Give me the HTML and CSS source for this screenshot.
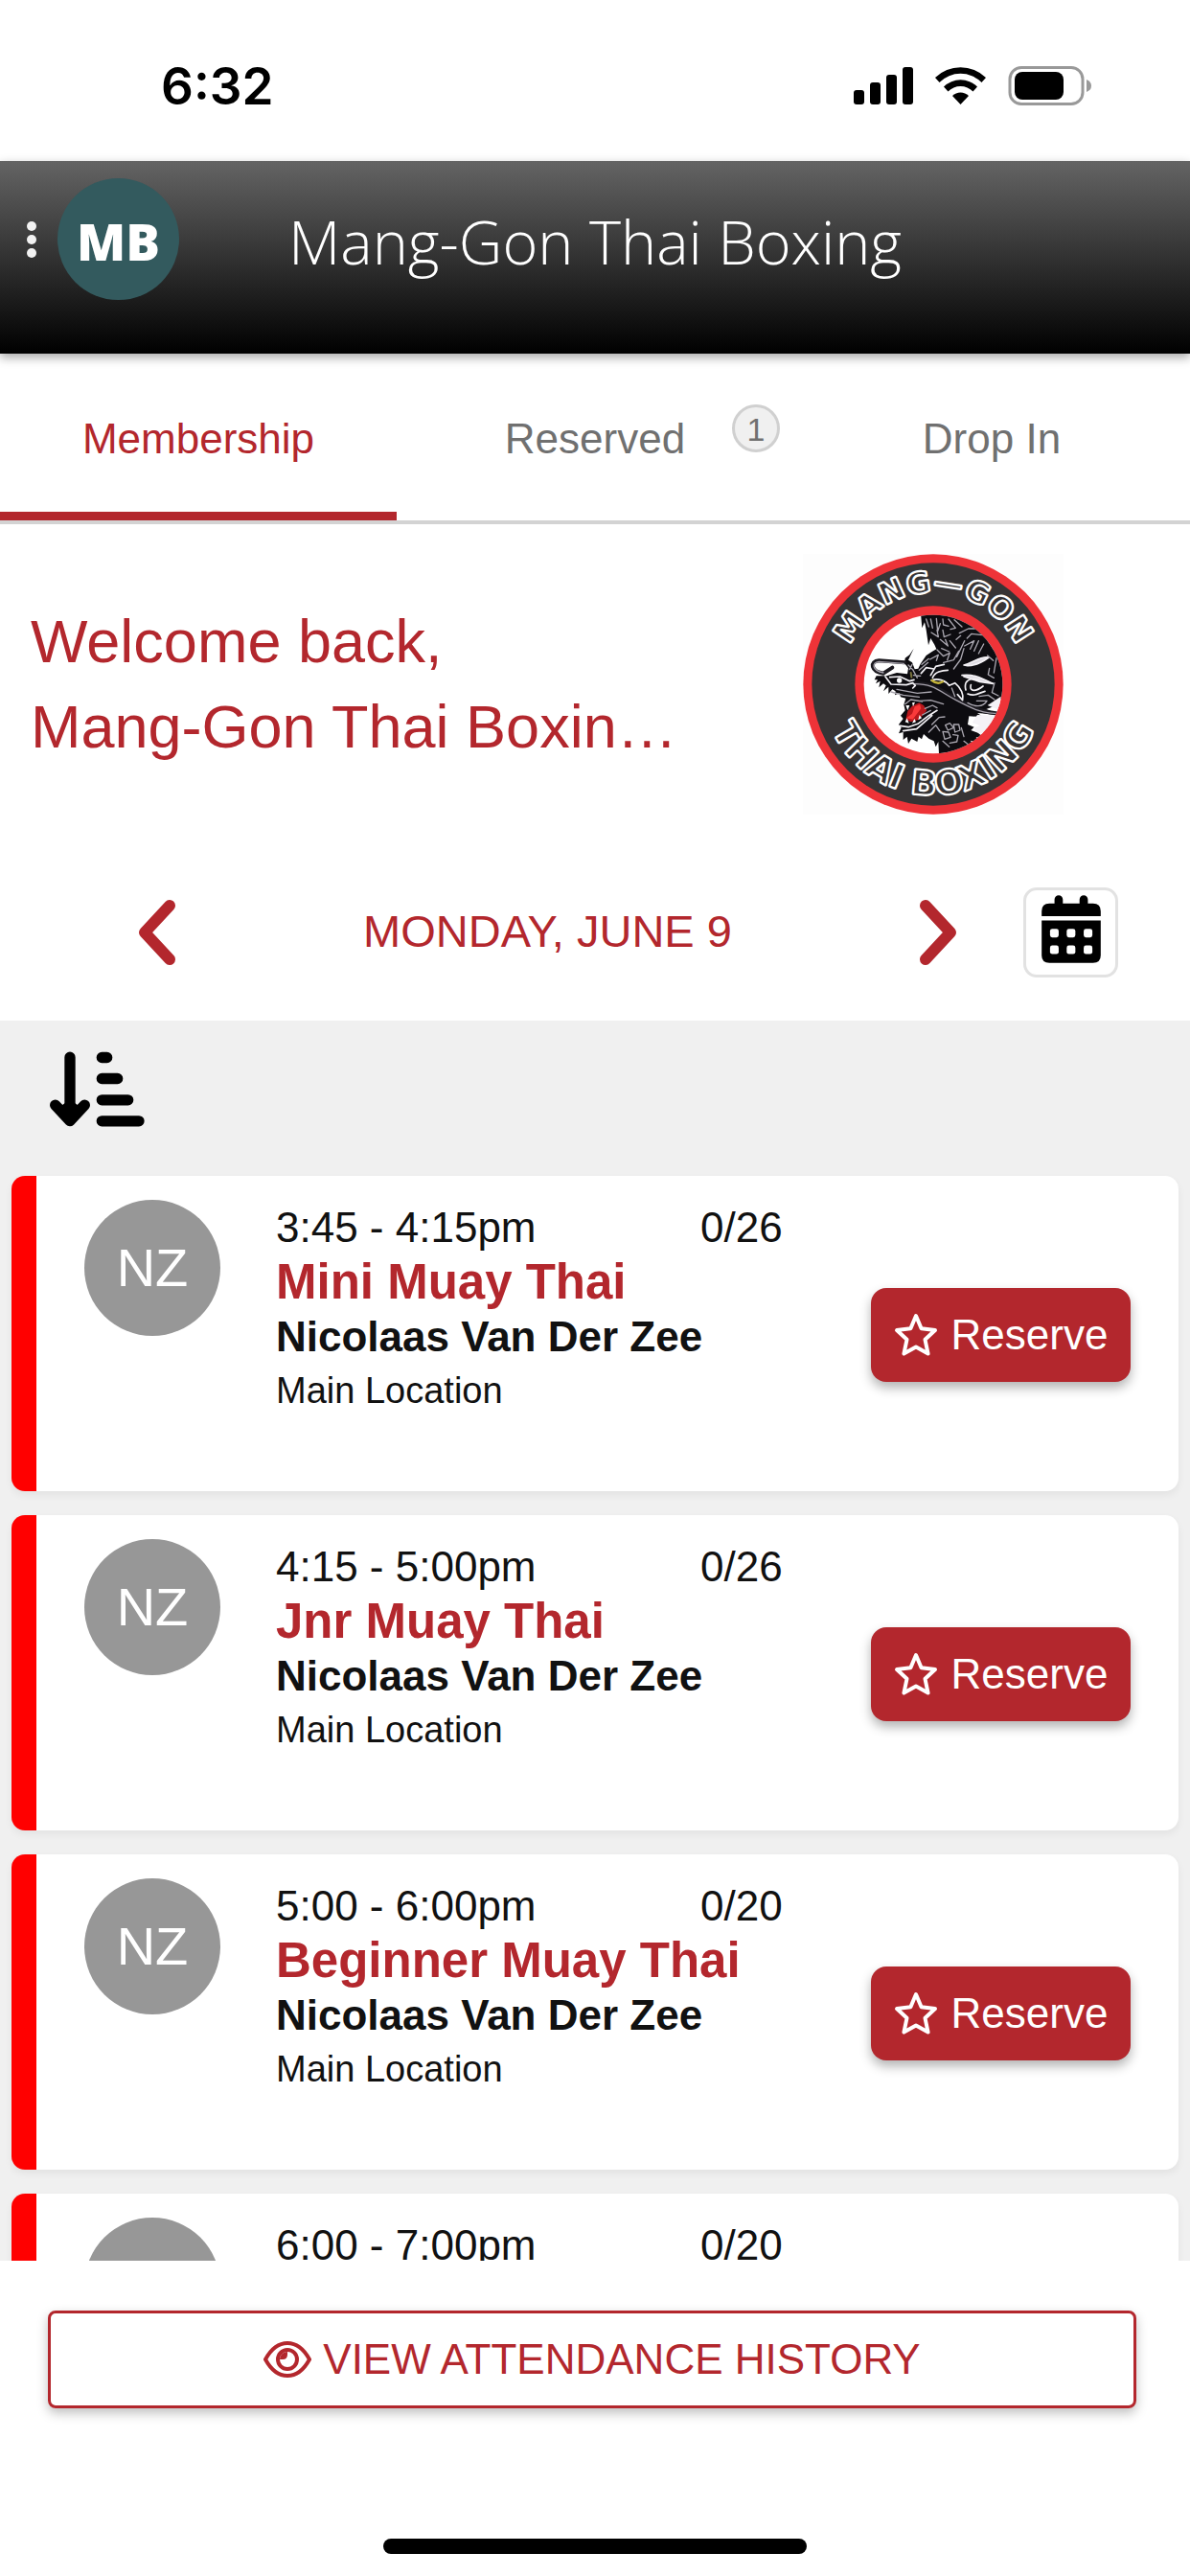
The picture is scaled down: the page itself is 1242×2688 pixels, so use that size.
FILE: index.html
```html
<!DOCTYPE html>
<html lang="en">
<head>
    <meta charset="UTF-8">
    <meta name="viewport" content="width=device-width, initial-scale=1.0">
    <title>Mang-Gon Thai Boxing</title>
    <link rel="stylesheet" href="styles.css">
</head>
<body>
    <!-- shared icons -->
    <svg class="sprite" aria-hidden="true">
        <symbol id="icon-star" viewBox="0 0 46 46">
            <path d="M23 3 L28.6 16.2 L43 18 L32.5 27.8 L35.6 42.6 L23 35.6 L10.4 42.6 L13.5 27.8 L3 18 L17.4 16.2 Z" fill="none" stroke="currentColor" stroke-width="4" stroke-linejoin="round"/>
        </symbol>
    </svg>

    <div class="app">
        <div class="status-bar">
            <span class="clock">6:32</span>
            <svg class="status-icons" viewBox="0 0 249 42" aria-hidden="true">
                <rect x="0" y="25" width="11" height="15" rx="3"/>
                <rect x="17" y="17" width="11" height="23" rx="3"/>
                <rect x="34" y="9" width="11" height="31" rx="3"/>
                <rect x="51" y="1" width="11" height="39" rx="3"/>
                <path d="M85 12 A38 38 0 0 1 138 12 L133.500 17 A31 31 0 0 0 89.500 17 Z"/>
                <path d="M94 21.500 A25 25 0 0 1 129 21.500 L124.500 26.500 A18 18 0 0 0 98.500 26.500 Z"/>
                <path d="M103 31 A12 12 0 0 1 120 31 L111.500 40 Z"/>
                <rect x="163" y="1.500" width="76" height="38" rx="12" fill="none" stroke="#999" stroke-width="3"/>
                <rect x="168" y="6" width="51" height="29" rx="8"/>
                <path d="M243 14 Q248 16 248 20.500 Q248 25 243 27 Z" fill="#999"/>
            </svg>
        </div>

        <header class="header">
            <div class="header-left">
                <button class="menu-button" aria-label="Menu">
                    <svg viewBox="0 0 10 38" aria-hidden="true">
                        <circle cx="5" cy="5" r="5"/><circle cx="5" cy="19" r="5"/><circle cx="5" cy="33" r="5"/>
                    </svg>
                </button>
                <div class="user-badge">MB</div>
            </div>
            <h1>Mang-Gon Thai Boxing</h1>
        </header>

        <nav class="tabs">
            <a class="tab active" href="#membership">Membership</a>
            <a class="tab" href="#reserved">Reserved<span class="tab-count">1</span></a>
            <a class="tab" href="#dropin">Drop In</a>
        </nav>

        <section class="welcome">
            <p>Welcome back,<br>Mang-Gon Thai Boxin…</p>
            <svg class="logo" viewBox="56 54 816 816" role="img" aria-label="Mang-Gon Thai Boxing logo">
                <defs>
                    <path id="arc-top" d="M178 461 A286 286 0 0 1 750 461"/>
                    <path id="arc-bottom" d="M115 461 A349 349 0 0 0 813 461"/>
                    <clipPath id="inner"><circle cx="254" cy="252" r="217"/></clipPath>
                </defs>
                <rect x="56" y="54" width="816" height="816" fill="#fdfdfd"/>
                <circle cx="464" cy="462" r="407" fill="#ee3338"/>
                <circle cx="464" cy="462" r="380" fill="#373435"/>
                <text class="logo-top"><textPath href="#arc-top" startOffset="50%">MANG—GON</textPath></text>
                <text class="logo-bottom"><textPath href="#arc-bottom" startOffset="50%">THAI BOXING</textPath></text>
                <circle cx="464" cy="462" r="245" fill="#ee3338"/>
                <circle cx="464" cy="462" r="217" fill="#fff"/>
                <!-- dragon -->
                <g transform="translate(210 210)" clip-path="url(#inner)" stroke-linecap="round" stroke-linejoin="round">
                    <path fill="#0d0c10" d="M215 30 L219 76 L227 58 L232 82 L239 130 L246 108 L258 128 L264 142 L250 150 L232 162 L214 188 L207 203 L196 205 L188 184 L176 176 L193 140 L180 160 L166 170 L164 186 L176 202 L173 220 L140 216 L108 226 L76 226 L70 238 L80 238 L74 250 L88 242 L84 262 L98 250 L106 256 L98 274 L114 260 L114 282 L126 268 L136 274 L134 286 L148 280 L152 292 L168 296 L162 316 L166 334 L152 350 L160 360 L146 378 L154 388 L146 406 L160 402 L160 426 L172 416 L176 438 L186 422 L204 432 L208 416 L218 424 L224 408 L240 422 L256 430 L262 448 L270 432 L272 470 L388 450 L370 428 L398 436 L388 418 L414 420 L394 404 L372 396 L382 386 L362 378 L366 352 L410 354 L392 342 L420 344 L470 350 L420 330 L446 320 L430 316 L470 296 L480 200 L440 110 L370 55 L300 34 Z"/>
                    <path fill="#f4f2f6" d="M392 348 L466 350 L440 392 L410 412 L388 400 L380 388 L400 382 L376 372 Z M424 318 L466 290 L464 334 Z"/>
                    <path fill="#b9181c" d="M168 362 L174 336 L188 320 L210 310 L224 318 L234 334 L210 362 L184 370 Z"/>
                    <path fill="#fa3a3a" d="M170 358 L188 344 L196 322 L212 315 L216 328 L202 346 L190 362 Z"/>
                    <path fill="#fff" d="M168 318 L174 334 L180 318 Z M188 310 L191 322 L197 308 Z M166 370 L172 358 L178 374 Z M188 374 L195 360 L200 370 Z M207 364 L211 348 L218 358 Z"/>
                    <!-- whiskers -->
                    <g fill="none" stroke="#1b191f" stroke-width="12">
                        <path d="M98 218 C58 212 54 180 84 178 L164 184 M98 218 L126 200"/>
                        <path d="M190 250 C256 248 270 268 326 298 S410 342 470 344"/>
                    </g>
                    <g fill="none" stroke="#a4a0aa" stroke-width="4">
                        <path d="M98 216 C62 210 60 184 84 181 L162 187"/>
                        <path d="M196 251 C256 251 270 272 326 302 S410 344 466 344"/>
                    </g>
                    <!-- snout, brow and jaw highlights -->
                    <g fill="none" stroke="#f3f1f5" stroke-width="5">
                        <path d="M104 228 L122 252 L170 254 L190 248 L198 256 L190 264 M118 230 L150 228 L180 242 L194 238"/>
                        <path d="M248 240 C268 232 292 240 304 256 L322 248 C342 264 350 286 346 302 L330 284"/>
                        <path d="M252 232 C258 214 282 208 300 208 M246 224 L262 196 L288 190 M216 218 L232 200 L256 204"/>
                        <path d="M150 382 L176 386 L206 376 L240 350 L266 334 M160 398 L202 392 L250 350"/>
                        <path d="M350 192 C382 184 398 164 428 168 C406 184 388 194 362 194 Z M344 224 C384 218 414 238 442 250 L400 244 L350 228" fill="#dedbe2"/>
                        <path d="M356 270 C348 240 370 230 398 238 M362 282 C386 292 398 278 416 274 M372 254 C366 278 390 274 410 258"/>
                    </g>
                    <g fill="none" stroke="#aaa7b0" stroke-width="4">
                        <path d="M122 276 L160 286 L210 292 M140 268 L204 280 L248 276 M210 304 L246 302 L286 314 M166 314 L184 300 L220 306"/>
                        <path d="M176 192 L190 206 L204 232 M188 190 L180 206 M210 208 L238 184 M218 190 L240 172 M192 224 L214 226"/>
                        <path d="M244 174 L270 160 L264 178 M266 144 L286 164 L306 154 L298 176 M286 184 L318 176 L334 148 M318 204 L340 174 L350 140 M328 166 L352 116 M280 140 L304 150"/>
                        <path d="M232 48 L240 72 M246 48 L252 76 M264 46 L268 86 L276 62 M284 48 L286 66 L302 70 M248 90 L270 104 L266 82 M284 82 L288 104 L308 96 M302 48 L324 76 L308 80 M320 50 L344 72"/>
                        <path d="M336 92 L364 78 L384 78 M360 108 L374 94 L408 98 M352 132 L382 116 L370 142 M382 148 L396 116 M396 156 L412 126 M326 112 L340 100 M276 112 L300 132 L292 112 M306 116 L324 138"/>
                        <path d="M426 116 L446 146 M424 162 L442 178 M452 170 L444 216 M430 202 L426 222 L444 232 M362 310 C382 322 410 326 422 304 L390 304 M398 290 L426 286 L446 300 M446 248 L438 278 L458 288"/>
                        <path d="M312 264 L322 290 M228 328 L252 318 L266 326 M220 348 L246 334 M250 378 L272 356 L290 354 M240 402 L262 380 L274 398"/>
                        <path d="M292 380 L306 374 L318 388 L300 396 Z M318 378 L334 378 L338 396 L322 402 Z M284 400 L302 402 L308 418 L290 424 Z M316 410 L332 412 L328 432 L306 436 M284 430 L304 448 M342 388 L350 416 M350 430 L368 444"/>
                    </g>
                    <circle cx="148" cy="240" r="8" fill="#fff"/>
                    <path d="M250 240 Q266 254 284 244" fill="none" stroke="#c3b33a" stroke-width="7"/>
                    <path d="M184 216 L186 230" stroke="#77713b" stroke-width="6"/>
                </g>
            </svg>
        </section>

        <section class="date-nav">
            <button class="arrow-button" aria-label="Previous day">
                <svg viewBox="0 0 39 68" aria-hidden="true"><path d="M33 6 L7 34 L33 62"/></svg>
            </button>
            <h2>MONDAY, JUNE 9</h2>
            <button class="arrow-button" aria-label="Next day">
                <svg viewBox="0 0 39 68" aria-hidden="true"><path d="M6 6 L32 34 L6 62"/></svg>
            </button>
            <button class="calendar-button" aria-label="Pick a date">
                <svg viewBox="0 0 184 212" aria-hidden="true">
                    <path d="M0 66 V50 Q0 26 24 26 H40 V14 A13 13 0 0 1 66 14 V26 H118 V14 A13 13 0 0 1 144 14 V26 H160 Q184 26 184 50 V66 Z"/>
                    <path d="M0 79 H184 V188 Q184 211 160 211 H24 Q0 211 0 188 Z"/>
                    <g fill="#fff">
                        <rect x="26" y="105" width="27" height="27" rx="7"/><rect x="78" y="105" width="27" height="27" rx="7"/><rect x="131" y="105" width="27" height="27" rx="7"/>
                        <rect x="26" y="157" width="27" height="27" rx="7"/><rect x="78" y="157" width="27" height="27" rx="7"/><rect x="131" y="157" width="27" height="27" rx="7"/>
                    </g>
                </svg>
            </button>
        </section>

        <main class="class-list">
            <div class="toolbar">
                <button class="sort-button" aria-label="Sort classes">
                    <svg viewBox="0 0 297 236" aria-hidden="true">
                        <g fill="none" stroke="#000" stroke-linecap="round" stroke-linejoin="round" stroke-width="34">
                            <path d="M63 18 V210 M17 168 L63 217 L109 168"/>
                            <path d="M163 19 H179 M163 85 H212 M163 152 H245 M163 218 H279"/>
                        </g>
                        <path d="M28 176 L63 150 L98 176 L63 212 Z"/>
                    </svg>
                </button>
            </div>

            <article class="class-card">
                <div class="avatar">NZ</div>
                <div class="class-info">
                    <div class="class-time"><span>3:45 - 4:15pm</span><span>0/26</span></div>
                    <h3>Mini Muay Thai</h3>
                    <div class="coach">Nicolaas Van Der Zee</div>
                    <div class="location">Main Location</div>
                </div>
                <button class="reserve-button"><svg aria-hidden="true"><use href="#icon-star"/></svg>Reserve</button>
            </article>

            <article class="class-card">
                <div class="avatar">NZ</div>
                <div class="class-info">
                    <div class="class-time"><span>4:15 - 5:00pm</span><span>0/26</span></div>
                    <h3>Jnr Muay Thai</h3>
                    <div class="coach">Nicolaas Van Der Zee</div>
                    <div class="location">Main Location</div>
                </div>
                <button class="reserve-button"><svg aria-hidden="true"><use href="#icon-star"/></svg>Reserve</button>
            </article>

            <article class="class-card">
                <div class="avatar">NZ</div>
                <div class="class-info">
                    <div class="class-time"><span>5:00 - 6:00pm</span><span>0/20</span></div>
                    <h3>Beginner Muay Thai</h3>
                    <div class="coach">Nicolaas Van Der Zee</div>
                    <div class="location">Main Location</div>
                </div>
                <button class="reserve-button"><svg aria-hidden="true"><use href="#icon-star"/></svg>Reserve</button>
            </article>

            <article class="class-card">
                <div class="avatar"></div>
                <div class="class-info">
                    <div class="class-time"><span>6:00 - 7:00pm</span><span>0/20</span></div>
                </div>
            </article>
        </main>

        <footer class="footer">
            <button class="history-button">
                <svg viewBox="0 0 50 40" aria-hidden="true">
                    <path d="M2 20 C8 9 16 3 25 3 S42 9 48 20 C42 31 34 37 25 37 S8 31 2 20 Z"/>
                    <circle cx="25" cy="20" r="10"/>
                    <path class="pupil" d="M25 12 V15 Q25 20 20 20 H17 A8 8 0 0 1 25 12 Z"/>
                </svg>
                VIEW ATTENDANCE HISTORY
            </button>
            <div class="home-indicator"></div>
        </footer>
    </div>
</body>
</html>
```
FILE: styles.css
```css
* {
    box-sizing: border-box;
}
body {
    font-family: "Liberation Sans", Arial, sans-serif;
    font-size: 44px;
    background-color: #fff;
    color: #111;
    margin: 0;
}
h1, h2, h3, p {
    margin: 0;
    font-weight: normal;
}
button {
    font: inherit;
    color: inherit;
    background: none;
    border: none;
    padding: 0;
    cursor: pointer;
}
svg {
    display: block;
    flex-shrink: 0;
}
.sprite {
    position: absolute;
    width: 0;
    height: 0;
}
.app {
    display: flex;
    flex-direction: column;
    height: 100vh;
}

/* Status bar */
.status-bar {
    display: flex;
    justify-content: space-between;
    align-items: center;
    height: 168px;
    padding: 12px 102px 0 168px;
}
.clock {
    font-family: Inter, sans-serif;
    font-size: 53px;
    font-weight: 600;
    color: #000;
}
.status-icons {
    width: 249px;
    height: 42px;
}

/* Header */
.header {
    display: grid;
    grid-template-columns: 1fr auto 1fr;
    align-items: center;
    padding: 18px 0 56px;
    background: linear-gradient(#646464, #000);
    box-shadow: 0 4px 10px rgba(0, 0, 0, 0.35);
    color: #fff;
    font-family: "Open Sans", sans-serif;
}
.header h1 {
    font-size: 63px;
    font-weight: 300;
    line-height: 80px;
    padding-top: 4px;
}
.header-left {
    display: flex;
    align-items: center;
    gap: 22px;
    padding-left: 28px;
}
.menu-button svg {
    width: 10px;
    height: 38px;
    fill: #f2f2f2;
}
.user-badge {
    width: 127px;
    height: 127px;
    padding-top: 2px;
    border-radius: 50%;
    background-color: #335a5e;
    font-size: 53px;
    font-weight: 800;
    line-height: 127px;
    text-align: center;
}

/* Tabs */
.tabs {
    display: flex;
    border-bottom: 4px solid #d3d3d3;
}
.tab {
    position: relative;
    flex: 1;
    padding-top: 12px;
    border-bottom: 9px solid transparent;
    color: #707070;
    line-height: 153px;
    text-align: center;
    text-decoration: none;
}
.tab.active {
    color: #b3272d;
    border-bottom-color: #b3272d;
}
.tab-count {
    position: absolute;
    top: 53px;
    right: 14px;
    width: 50px;
    height: 50px;
    border: 3px solid #d0d0d0;
    border-radius: 50%;
    background-color: #f0f0f0;
    font-size: 34px;
    line-height: 46px;
}

/* Welcome */
.welcome {
    display: flex;
    align-items: center;
    justify-content: space-between;
    padding: 31px 132px 0 32px;
    color: #b3272d;
    font-size: 63px;
    line-height: 89px;
}
.logo {
    width: 272px;
    height: 272px;
}
.logo text {
    font-family: "DejaVu Sans", sans-serif;
    font-weight: bold;
    text-anchor: middle;
    fill: #373435;
    stroke: #fff;
    stroke-width: 7px;
    stroke-linejoin: bevel;
}
.logo-top {
    font-size: 94px;
}
.logo-bottom {
    font-size: 108px;
}

/* Date navigation */
.date-nav {
    display: flex;
    align-items: center;
    padding: 76px 75px 45px 144px;
    color: #b3272d;
}
.date-nav h2 {
    flex: 1;
    padding-bottom: 4px;
    font-size: 47px;
    text-align: center;
}
.arrow-button svg {
    width: 39px;
    height: 68px;
    fill: none;
    stroke: #b3272d;
    stroke-width: 12px;
    stroke-linecap: round;
    stroke-linejoin: round;
}
.calendar-button {
    display: flex;
    align-items: flex-start;
    justify-content: center;
    width: 99px;
    height: 94px;
    margin-left: 69px;
    padding-top: 5px;
    border: 3px solid #e2e2e2;
    border-radius: 14px;
}
.calendar-button svg {
    width: 62px;
    height: 71px;
    fill: #000;
}

/* Class list */
.class-list {
    flex: 1;
    min-height: 0;
    overflow: hidden;
    background-color: #f0f0f0;
}
.toolbar {
    display: flex;
    padding: 32px 52px 51px;
}
.sort-button svg {
    width: 99px;
    height: 79px;
}
.class-card {
    display: flex;
    align-items: flex-start;
    gap: 58px;
    margin: 0 12px 25px;
    padding: 25px 50px 76px;
    border-left: 26px solid #f00;
    border-radius: 14px;
    background-color: #fff;
    box-shadow: 0 4px 8px rgba(0, 0, 0, 0.06);
}
.avatar {
    width: 142px;
    height: 142px;
    border-radius: 50%;
    background-color: #979797;
    color: #fff;
    font-size: 56px;
    line-height: 142px;
    text-align: center;
}
.class-info {
    flex: 1;
    line-height: 57px;
}
.class-time {
    display: grid;
    grid-template-columns: 443px 1fr;
}
.class-info h3 {
    color: #b3272d;
    font-size: 51px;
    font-weight: bold;
}
.coach {
    font-weight: bold;
}
.location {
    font-size: 38px;
}
.reserve-button {
    display: flex;
    align-items: center;
    justify-content: center;
    gap: 14px;
    width: 271px;
    height: 98px;
    margin-top: 92px;
    border-radius: 16px;
    background-color: #b3272d;
    box-shadow: 0 6px 12px rgba(0, 0, 0, 0.3);
    color: #fff;
}
.reserve-button svg {
    width: 46px;
    height: 46px;
}

/* Footer */
.footer {
    display: flex;
    flex-direction: column;
    padding: 52px 0 23px;
}
.history-button {
    display: flex;
    align-items: center;
    justify-content: center;
    gap: 12px;
    height: 102px;
    margin: 0 56px 136px 50px;
    border: 3px solid #b3272d;
    border-radius: 8px;
    box-shadow: 0 5px 12px rgba(0, 0, 0, 0.25);
    color: #b3272d;
}
.history-button svg {
    width: 50px;
    height: 40px;
    fill: none;
    stroke: #b3272d;
    stroke-width: 4px;
}
.history-button .pupil {
    fill: #b3272d;
    stroke: none;
}
.home-indicator {
    align-self: center;
    width: 442px;
    height: 16px;
    border-radius: 8px;
    background-color: #000;
}
```
